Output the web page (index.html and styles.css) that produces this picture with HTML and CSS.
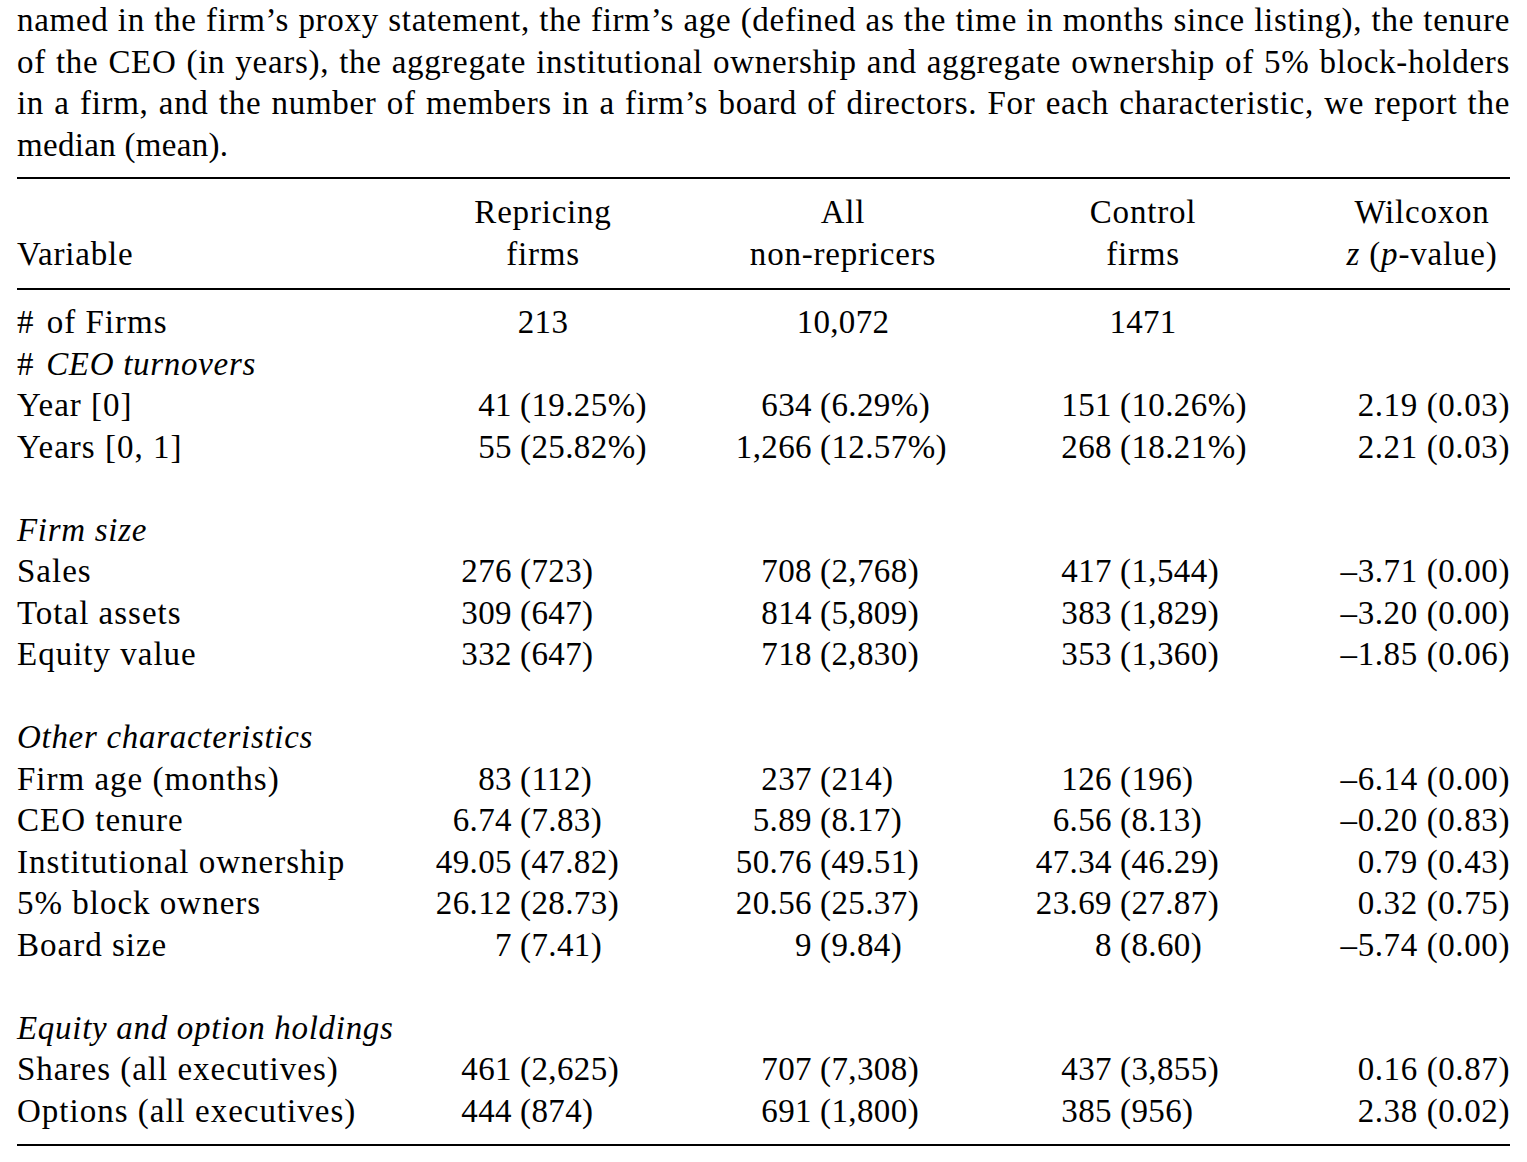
FILE: index.html
```html
<!DOCTYPE html>
<html lang="en">
<head>
<meta charset="utf-8">
<title>Repricing firms table</title>
<link rel="stylesheet" href="styles.css">
</head>
<body>
<div class="page">
  <div class="caption">
    <div class="line">named in the firm’s proxy statement, the firm’s age (defined as the time in months since listing), the tenure</div>
    <div class="line">of the CEO (in years), the aggregate institutional ownership and aggregate ownership of 5% block-holders</div>
    <div class="line">in a firm, and the number of members in a firm’s board of directors. For each characteristic, we report the</div>
    <div class="line last">median (mean).</div>
  </div>

  <table class="tbl">
    <colgroup>
      <col class="c-label">
      <col class="c-num">
      <col class="c-num">
      <col class="c-num">
      <col class="c-z">
    </colgroup>
    <thead>
      <tr>
        <th class="h-label">Variable</th>
        <th class="h-col">Repricing<br>firms</th>
        <th class="h-col">All<br>non-repricers</th>
        <th class="h-col">Control<br>firms</th>
        <th class="h-col h-z">Wilcoxon<br><i>z</i> (<i>p</i>-value)</th>
      </tr>
    </thead>
    <tbody>
      <tr class="first">
        <td class="lab"><span class="hash">#</span> of Firms</td>
        <td class="ctr">213</td>
        <td class="ctr">10,072</td>
        <td class="ctr">1471</td>
        <td class="z"></td>
      </tr>
      <tr>
        <td class="sec"><span class="up hash">#</span> CEO turnovers</td>
        <td></td><td></td><td></td><td></td>
      </tr>
      <tr>
        <td class="lab">Year [0]</td>
        <td><span class="n">41</span><span class="p">(19.25%)</span></td>
        <td><span class="n">634</span><span class="p">(6.29%)</span></td>
        <td><span class="n">151</span><span class="p">(10.26%)</span></td>
        <td class="z">2.19 (0.03)</td>
      </tr>
      <tr>
        <td class="lab">Years [0, 1]</td>
        <td><span class="n">55</span><span class="p">(25.82%)</span></td>
        <td><span class="n">1,266</span><span class="p">(12.57%)</span></td>
        <td><span class="n">268</span><span class="p">(18.21%)</span></td>
        <td class="z">2.21 (0.03)</td>
      </tr>
      <tr class="gap"><td colspan="5"></td></tr>
      <tr>
        <td class="sec">Firm size</td>
        <td></td><td></td><td></td><td></td>
      </tr>
      <tr>
        <td class="lab">Sales</td>
        <td><span class="n">276</span><span class="p">(723)</span></td>
        <td><span class="n">708</span><span class="p">(2,768)</span></td>
        <td><span class="n">417</span><span class="p">(1,544)</span></td>
        <td class="z">–3.71 (0.00)</td>
      </tr>
      <tr>
        <td class="lab">Total assets</td>
        <td><span class="n">309</span><span class="p">(647)</span></td>
        <td><span class="n">814</span><span class="p">(5,809)</span></td>
        <td><span class="n">383</span><span class="p">(1,829)</span></td>
        <td class="z">–3.20 (0.00)</td>
      </tr>
      <tr>
        <td class="lab">Equity value</td>
        <td><span class="n">332</span><span class="p">(647)</span></td>
        <td><span class="n">718</span><span class="p">(2,830)</span></td>
        <td><span class="n">353</span><span class="p">(1,360)</span></td>
        <td class="z">–1.85 (0.06)</td>
      </tr>
      <tr class="gap"><td colspan="5"></td></tr>
      <tr>
        <td class="sec">Other characteristics</td>
        <td></td><td></td><td></td><td></td>
      </tr>
      <tr>
        <td class="lab">Firm age (months)</td>
        <td><span class="n">83</span><span class="p">(112)</span></td>
        <td><span class="n">237</span><span class="p">(214)</span></td>
        <td><span class="n">126</span><span class="p">(196)</span></td>
        <td class="z">–6.14 (0.00)</td>
      </tr>
      <tr>
        <td class="lab">CEO tenure</td>
        <td><span class="n">6.74</span><span class="p">(7.83)</span></td>
        <td><span class="n">5.89</span><span class="p">(8.17)</span></td>
        <td><span class="n">6.56</span><span class="p">(8.13)</span></td>
        <td class="z">–0.20 (0.83)</td>
      </tr>
      <tr>
        <td class="lab">Institutional ownership</td>
        <td><span class="n">49.05</span><span class="p">(47.82)</span></td>
        <td><span class="n">50.76</span><span class="p">(49.51)</span></td>
        <td><span class="n">47.34</span><span class="p">(46.29)</span></td>
        <td class="z">0.79 (0.43)</td>
      </tr>
      <tr>
        <td class="lab">5% block owners</td>
        <td><span class="n">26.12</span><span class="p">(28.73)</span></td>
        <td><span class="n">20.56</span><span class="p">(25.37)</span></td>
        <td><span class="n">23.69</span><span class="p">(27.87)</span></td>
        <td class="z">0.32 (0.75)</td>
      </tr>
      <tr>
        <td class="lab">Board size</td>
        <td><span class="n">7</span><span class="p">(7.41)</span></td>
        <td><span class="n">9</span><span class="p">(9.84)</span></td>
        <td><span class="n">8</span><span class="p">(8.60)</span></td>
        <td class="z">–5.74 (0.00)</td>
      </tr>
      <tr class="gap"><td colspan="5"></td></tr>
      <tr>
        <td class="sec">Equity and option holdings</td>
        <td></td><td></td><td></td><td></td>
      </tr>
      <tr>
        <td class="lab">Shares (all executives)</td>
        <td><span class="n">461</span><span class="p">(2,625)</span></td>
        <td><span class="n">707</span><span class="p">(7,308)</span></td>
        <td><span class="n">437</span><span class="p">(3,855)</span></td>
        <td class="z">0.16 (0.87)</td>
      </tr>
      <tr class="last">
        <td class="lab">Options (all executives)</td>
        <td><span class="n">444</span><span class="p">(874)</span></td>
        <td><span class="n">691</span><span class="p">(1,800)</span></td>
        <td><span class="n">385</span><span class="p">(956)</span></td>
        <td class="z">2.38 (0.02)</td>
      </tr>
    </tbody>
  </table>
</div>
</body>
</html>
```

FILE: styles.css
```css
html, body {
  margin: 0;
  padding: 0;
  background: #ffffff;
}

body {
  font-family: "Liberation Serif", "Times New Roman", serif;
  font-size: 33px;
  line-height: 41.5px;
  color: #000000;
}

.page {
  width: 1493px;
  padding: 0 17px;
}

.caption .line {
  white-space: nowrap;
  text-align: justify;
  text-align-last: justify;
  letter-spacing: 0.7px;
}

.caption .line.last {
  text-align-last: left;
  letter-spacing: 0.3px;
}

.tbl {
  width: 1493px;
  margin-top: 11px;
  border-collapse: collapse;
  table-layout: fixed;
  border-top: 2px solid #000;
  border-bottom: 2px solid #000;
}

.c-label { width: 376px; }
.c-num { width: 300px; }
.c-z { width: 217px; }

.tbl th,
.tbl td {
  padding: 0;
  font-weight: normal;
  white-space: nowrap;
  height: 41.5px;
}

.tbl thead th {
  padding-top: 13px;
  padding-bottom: 13px;
  border-bottom: 2px solid #000;
  vertical-align: bottom;
}

.h-label {
  text-align: left;
  letter-spacing: 0.8px;
}

.h-col {
  text-align: center;
  letter-spacing: 0.8px;
}

.h-z {
  padding-left: 41px !important;
}

.tbl tbody tr.first td {
  padding-top: 12px;
}

.tbl tbody tr.last td {
  padding-bottom: 12px;
}

.lab {
  letter-spacing: 1px;
}

.hash {
  margin-right: 3px;
}

.sec {
  font-style: italic;
  letter-spacing: 0.7px;
}

.sec .up {
  font-style: normal;
}

.ctr {
  text-align: center;
  letter-spacing: 0.3px;
}

.n {
  display: inline-block;
  width: 127px;
  padding-right: 8px;
  box-sizing: border-box;
  text-align: right;
  letter-spacing: 0.4px;
}

.p {
  letter-spacing: 0.4px;
}

.z {
  text-align: right;
  letter-spacing: 0.6px;
}

.gap td {
  height: 41.5px;
}
```
